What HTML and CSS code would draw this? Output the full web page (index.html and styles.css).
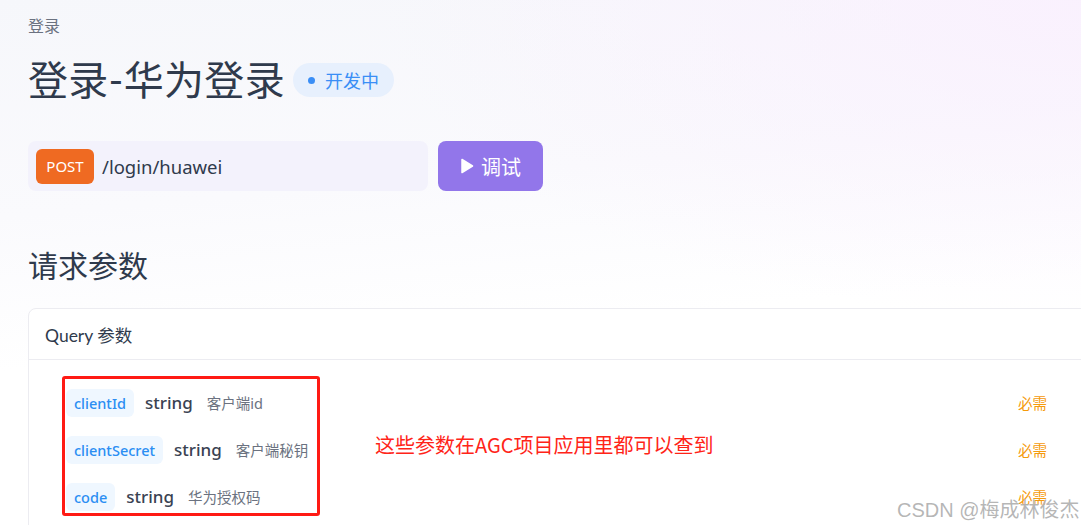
FILE: index.html
```html
<!doctype html>
<html>
<head>
	<title>登录-华为登录</title>
	<link rel="stylesheet" href="styles.css">
</head>
<body>
	<div class="page">
		<div class="crumb">登录</div>
		<div class="title-row">
			<h1 class="title">登录-华为登录</h1>
			<span class="status"><i class="dot"></i>开发中</span>
		</div>
		<div class="api-row">
			<div class="url-bar">
				<span class="method">POST</span>
				<span class="path">/login/huawei</span>
			</div>
			<div class="btn-run">
				<svg width="14" height="16" viewBox="0 0 14 16"><path d="M2 1.5 L12.5 8 L2 14.5 Z" fill="#fff" stroke="#fff" stroke-width="1.5" stroke-linejoin="round"/></svg>
				<span>调试</span>
			</div>
		</div>
		<h2 class="section">请求参数</h2>
		<div class="card">
			<div class="card-head">Query 参数</div>
			<div class="card-body">
				<div class="param">
					<span class="name">clientId</span>
					<span class="type">string</span>
					<span class="desc">客户端id</span>
					<span class="req">必需</span>
				</div>
				<div class="param">
					<span class="name">clientSecret</span>
					<span class="type">string</span>
					<span class="desc">客户端秘钥</span>
					<span class="req">必需</span>
				</div>
				<div class="param">
					<span class="name">code</span>
					<span class="type">string</span>
					<span class="desc">华为授权码</span>
					<span class="req">必需</span>
				</div>
				<div class="mark-box"></div>
				<div class="mark-note">这些参数在AGC项目应用里都可以查到</div>
			</div>
		</div>
	</div>
	<div class="watermark">CSDN @梅成林俊杰</div>
</body>
</html>
```

FILE: styles.css
```css
* { margin: 0; padding: 0; box-sizing: border-box; }
html, body { height: 100%; }
body { overflow: hidden; position: relative; font-family: Lato, "Noto Sans CJK SC", sans-serif; color: #2f3a4c;
	background: radial-gradient(ellipse 700px 320px at 100% 0%, rgba(250,240,254,0.9), rgba(250,240,254,0) 100%),
		linear-gradient(175deg, #f6f7fb 0%, #fafafd 35%, #ffffff 60%); }
.page { position: relative; padding: 14px 0 0 28px; }
.crumb { font-size: 16px; color: #6b7280; line-height: 24px; }
.title-row { display: flex; align-items: center; margin-top: 18px; }
.title { font-size: 40px; font-weight: 400; line-height: 48px; color: #2f3a4c; letter-spacing: 0.3px; }
.status { display: flex; align-items: center; margin-left: 8px; height: 34px; padding: 0 15px 0 15px; border-radius: 17px; background: #e7f0fd; color: #3a8ef6; font-size: 18px; }
.status .dot { width: 7px; height: 7px; border-radius: 50%; background: #3a8ef6; margin-right: 10px; }
.api-row { display: flex; margin-top: 37px; }
.url-bar { display: flex; align-items: center; width: 400px; height: 50px; padding: 0 8px; border-radius: 8px; background: #f3f2fc; }
.method { display: flex; align-items: center; justify-content: center; width: 58px; height: 35px; border-radius: 6px; background: #ef6a22; color: #fff; font-size: 15px; font-family: "Noto Sans", sans-serif; }
.path { margin-left: 8px; font-size: 18.5px; color: #2f3a4c; font-family: "Noto Sans", sans-serif; }
.btn-run { display: flex; align-items: center; justify-content: center; gap: 7px; width: 105px; height: 50px; margin-left: 10px; border-radius: 8px; background: #9276ea; color: #fff; font-size: 20px; }
.section { font-size: 30px; font-weight: 400; line-height: 40px; margin-top: 54px; color: #2f3a4c; }
.card { margin-top: 23px; width: 1080px; border: 1px solid #ececf1; border-radius: 8px; background: #fff; }
.card-head { height: 51px; padding-left: 16px; display: flex; align-items: center; font-size: 17.5px; color: #2f3a4c; border-bottom: 1px solid #ececf1; }
.card-body { position: relative; padding: 19px 0 30px 37px; font-family: "Noto Sans", "Noto Sans CJK SC", sans-serif; }
.param { display: flex; align-items: center; height: 47px; padding-right: 60px; }
.name { padding: 0 8px; height: 28px; line-height: 28px; border-radius: 6px; background: #eff7ff; color: #2b8ef3; font-size: 14.5px; font-weight: 500; }
.type { margin-left: 11px; font-size: 17px; color: #3a4252; font-weight: 500; }
.desc { margin-left: 14px; font-size: 14.5px; color: #6b7280; }
.req { margin-left: auto; font-size: 14.5px; color: #f59a0b; }
.mark-box { position: absolute; left: 33px; top: 16px; width: 258px; height: 140px; border: 3px solid #ff1a14; border-radius: 3px; }
.mark-note { position: absolute; left: 346px; top: 70px; font-size: 20px; color: #ff2418; font-family: "Noto Sans CJK SC", sans-serif; }
.watermark { position: absolute; left: 897px; top: 494px; font-size: 20px; color: rgba(150,150,150,0.7); font-family: "Liberation Sans", "Noto Sans CJK SC", sans-serif; text-shadow: 0 0 1px rgba(255,255,255,0.9); }
```
